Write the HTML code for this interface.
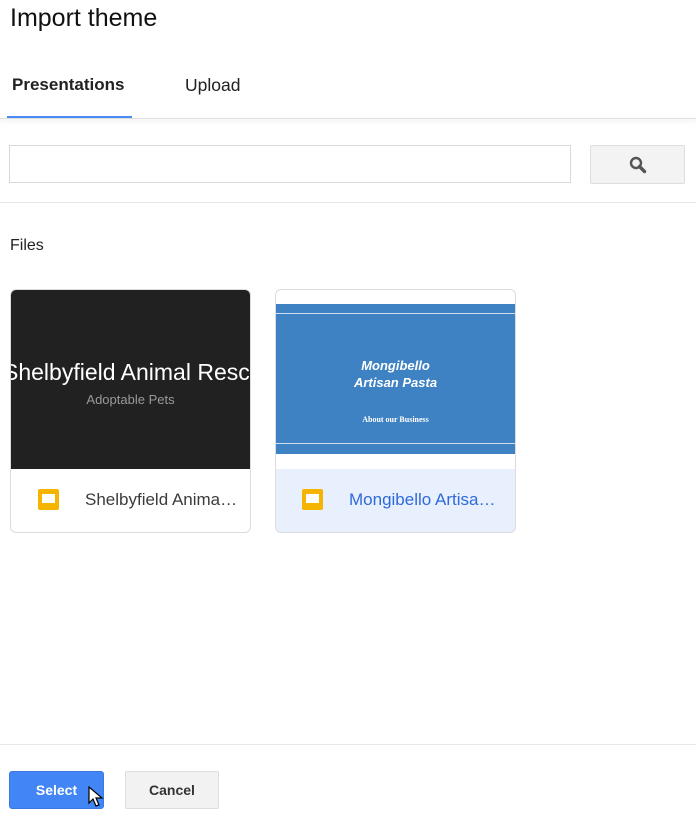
<!DOCTYPE html>
<html><head><style>
*{box-sizing:border-box;margin:0;padding:0}
body{width:696px;height:822px;background:#fff;font-family:"Liberation Sans",Arial,sans-serif;position:relative;overflow:hidden;color:#222}
.a{position:absolute}
</style></head><body>
<div class="a" style="left:10px;top:4px;font-size:25px;color:#111">Import theme</div>
<div class="a" style="left:12px;top:75px;font-size:17px;font-weight:bold;color:#222">Presentations</div>
<div class="a" style="left:185px;top:75px;font-size:17.5px;color:#222">Upload</div>
<div class="a" style="left:7px;top:116px;width:125px;height:2px;background:#4d8cf5"></div>
<div class="a" style="left:0;top:118px;width:696px;height:1px;background:#e0e0e0;box-shadow:0 2px 5px rgba(0,0,0,.18)"></div>
<div class="a" style="left:9px;top:145px;width:562px;height:38px;border:1px solid #d9d9d9"></div>
<div class="a" style="left:590px;top:145px;width:95px;height:39px;border:1px solid #ddd;background:#f3f3f3;border-radius:2px">
<svg class="a" style="left:37px;top:9px" width="22" height="20" viewBox="0 0 22 20"><circle cx="8" cy="8" r="5" fill="none" stroke="#555" stroke-width="2.4"/><path d="M11.5 11.5l5 5" stroke="#555" stroke-width="3.4" stroke-linecap="round"/></svg></div>
<div class="a" style="left:0;top:202px;width:696px;height:1px;background:#e8e8e8"></div>
<div class="a" style="left:10px;top:237px;font-size:16px;color:#222">Files</div>

<div class="a" style="left:10px;top:289px;width:241px;height:244px;border:1px solid #dadce0;border-radius:6px;overflow:hidden">
<div class="a" style="left:0;top:0;width:239px;height:179px;background:#212121;overflow:hidden">
<div class="a" style="left:-8px;top:69px;white-space:nowrap;font-size:23px;color:#fff">Shelbyfield Animal Rescue</div>
<div class="a" style="left:0;width:239px;top:102px;text-align:center;font-size:13px;color:#999">Adoptable Pets</div></div>
<div class="a" style="left:27px;top:199px;width:21px;height:21px;background:#f4b400;border-radius:2px"><div class="a" style="left:4px;top:5px;width:13px;height:9px;background:#fff"></div></div>
<div class="a" style="left:74px;top:200px;font-size:17px;color:#3c3c3c">Shelbyfield Anima…</div>
</div>

<div class="a" style="left:275px;top:289px;width:241px;height:244px;border:1px solid #dadce0;border-radius:6px;overflow:hidden;background:#e8f0fd">
<div class="a" style="left:0;top:0;width:239px;height:179px;background:#fff">
<div class="a" style="left:0;top:14px;width:239px;height:150px;background:#3f82c4">
<div class="a" style="left:0;top:9px;width:239px;height:1px;background:#cde"></div>
<div class="a" style="left:0;top:139px;width:239px;height:1px;background:#cde"></div>
<div class="a" style="left:0;width:239px;top:53px;text-align:center;font-size:13px;line-height:17px;color:#fff;font-weight:bold;font-style:italic">Mongibello<br>Artisan Pasta</div>
<div class="a" style="left:0;width:239px;top:111px;text-align:center;font-size:8px;color:#fff;font-weight:bold;font-family:'Liberation Serif',serif">About our Business</div>
</div></div>
<div class="a" style="left:26px;top:199px;width:21px;height:21px;background:#f4b400;border-radius:2px"><div class="a" style="left:4px;top:5px;width:13px;height:9px;background:#fff"></div></div>
<div class="a" style="left:73px;top:200px;font-size:17px;color:#2f6ad9">Mongibello Artisa…</div>
</div>

<div class="a" style="left:0;top:744px;width:696px;height:1px;background:#e8e8e8"></div>
<div class="a" style="left:9px;top:771px;width:95px;height:38px;background:#4285f4;border:1px solid #3b78e0;border-radius:3px;color:#fff;font-weight:bold;font-size:14px;text-align:center;line-height:36px">Select</div>
<svg class="a" style="left:88px;top:786px" width="16" height="22" viewBox="0 0 16 22"><path d="M1 1v16l4-4 3 7 3-1-3-7h6z" fill="#fff" stroke="#000" stroke-width="1.2"/></svg>
<div class="a" style="left:125px;top:771px;width:94px;height:38px;background:#f2f2f2;border:1px solid #ddd;border-radius:2px;color:#333;font-weight:bold;font-size:14px;text-align:center;line-height:36px">Cancel</div>
</body></html>
